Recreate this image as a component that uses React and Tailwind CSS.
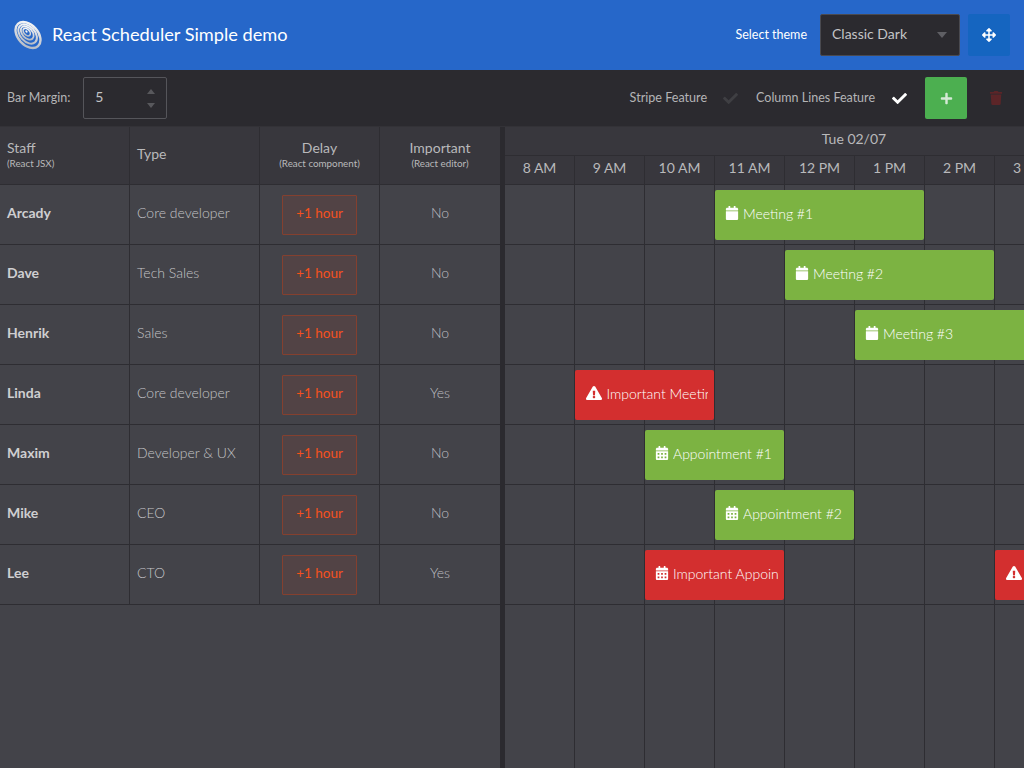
import React from 'react';
import { FaArrowsAlt, FaCheck, FaPlus, FaTrash, FaCalendar, FaCalendarAlt, FaExclamationTriangle } from 'react-icons/fa';

const hours = ['8 AM', '9 AM', '10 AM', '11 AM', '12 PM', '1 PM', '2 PM', '3 PM'];

const rows = [
  { name: 'Arcady', type: 'Core developer', important: 'No', bars: [{ left: 210, width: 209, text: 'Meeting #1', icon: 'cal' }] },
  { name: 'Dave', type: 'Tech Sales', important: 'No', bars: [{ left: 280, width: 209, text: 'Meeting #2', icon: 'cal' }] },
  { name: 'Henrik', type: 'Sales', important: 'No', bars: [{ left: 350, width: 209, text: 'Meeting #3', icon: 'cal' }] },
  { name: 'Linda', type: 'Core developer', important: 'Yes', bars: [{ left: 70, width: 139, text: 'Important Meeting', icon: 'warn', red: true }] },
  { name: 'Maxim', type: 'Developer & UX', important: 'No', bars: [{ left: 140, width: 139, text: 'Appointment #1', icon: 'grid' }] },
  { name: 'Mike', type: 'CEO', important: 'No', bars: [{ left: 210, width: 139, text: 'Appointment #2', icon: 'grid' }] },
  { name: 'Lee', type: 'CTO', important: 'Yes', bars: [
    { left: 140, width: 139, text: 'Important Appointment', icon: 'grid', red: true },
    { left: 490, width: 139, text: 'Important Meeting', icon: 'warn', red: true },
  ] },
];

const Logo = () => (
  <svg width="30" height="30" viewBox="0 0 30 30" fill="none">
    <defs>
      <linearGradient id="logoFade" x1="0" y1="0" x2="1" y2="1">
        <stop offset="0" stopColor="#ffffff" />
        <stop offset="1" stopColor="#a9b1bd" />
      </linearGradient>
    </defs>
    <g transform="rotate(48 15 15)" stroke="url(#logoFade)">
      <ellipse cx="15" cy="15" rx="15" ry="10" strokeWidth="2.4" />
      <ellipse cx="14" cy="14.6" rx="11.2" ry="7.4" strokeWidth="2" />
      <ellipse cx="13" cy="14.2" rx="7.8" ry="5" strokeWidth="1.8" />
      <ellipse cx="12" cy="14" rx="4.4" ry="2.8" strokeWidth="1.6" />
      <ellipse cx="11.4" cy="13.9" rx="1.2" ry="0.8" fill="#ffffff" strokeWidth="0.5" />
    </g>
  </svg>
);

const BarIcon = ({ icon }) => {
  if (icon === 'warn') return <FaExclamationTriangle className="ml-[1.5px] text-white text-[16px] shrink-0" />;
  if (icon === 'grid') return <FaCalendarAlt className="text-white text-[14px] shrink-0" />;
  return <FaCalendar className="text-white text-[14px] shrink-0" />;
};

const HourCells = ({ className }) => (
  <>
    {hours.map(h => (
      <div key={h} className={`w-[70px] shrink-0 border-r border-[#2e2d32] ${className}`} />
    ))}
  </>
);

const App = () => {
  return (
    <div className="w-[1024px] h-[768px] overflow-hidden flex flex-col bg-[#434349] font-['Lato',sans-serif]">
      {/* header */}
      <div className="h-[70px] shrink-0 bg-[#2667c9] flex items-center pl-[13px] pr-[14px]">
        <Logo />
        <div className="ml-[9px] text-[18.2px] text-white">React Scheduler Simple demo</div>
        <div className="ml-auto text-[12.5px] text-white">Select theme</div>
        <div className="ml-[13px] w-[140px] h-[42px] bg-[#2b2a2f] border border-[#4a4a50] rounded-[2px] flex items-center pl-[11px] pr-[12px] pb-[4px] text-[14px] text-[#c4c4c6]">
          Classic Dark
          <div className="ml-auto mt-[4px] w-0 h-0 border-x-[5.5px] border-x-transparent border-t-[6px] border-t-[#5f5f64]" />
        </div>
        <div className="ml-2 w-[42px] h-[42px] bg-[#1565c0] rounded-[2px] flex items-center justify-center">
          <FaArrowsAlt className="text-white text-[14px]" />
        </div>
      </div>

      {/* toolbar */}
      <div className="h-[57px] shrink-0 bg-[#2b2a2f] flex items-center pl-[7px] border-b border-[#333237]">
        <div className="text-[12.5px] text-[#b4b4b6]">Bar Margin:</div>
        <div className="ml-[13px] w-[84px] h-[42px] border border-[#55555a] rounded-[2px] flex items-center pl-[11px] pr-[11px] text-[14px] text-[#c4c4c6]">
          <span className="pb-[4px]">5</span>
          <div className="ml-auto flex flex-col gap-[9px]">
            <div className="w-0 h-0 border-x-[4px] border-x-transparent border-b-[5px] border-b-[#58585c]" />
            <div className="w-0 h-0 border-x-[4px] border-x-transparent border-t-[5px] border-t-[#58585c]" />
          </div>
        </div>
        <div className="ml-auto text-[12.6px] text-[#b4b4b6]">Stripe Feature</div>
        <FaCheck className="ml-4 text-[#3f3f43] text-[15px]" />
        <div className="ml-[18px] text-[12.5px] text-[#b4b4b6]">Column Lines Feature</div>
        <FaCheck className="ml-[17px] text-white text-[15px]" />
        <div className="ml-[18px] w-[42px] h-[42px] bg-[#4caf50] rounded-[2px] flex items-center justify-center">
          <FaPlus className="text-[#d5e9d6] text-[13px]" />
        </div>
        <div className="w-[57px] flex justify-center">
          <FaTrash className="text-[#5c2528] text-[14px]" />
        </div>
      </div>

      <div className="flex-1 flex min-h-0">
        {/* locked grid */}
        <div className="w-[500px] shrink-0 flex flex-col">
          <div className="h-[58px] shrink-0 flex bg-[#38373d] border-b border-[#2e2d32] text-[#b9b9bb]">
            <div className="w-[130px] border-r border-[#2e2d32] pl-[7px] pb-[4px] flex flex-col justify-center">
              <div className="text-[14px] leading-[18px]">Staff</div>
              <div className="text-[9.8px] leading-[12px]">(React JSX)</div>
            </div>
            <div className="w-[130px] border-r border-[#2e2d32] pl-[7px] pb-[4px] flex items-center text-[14px]">Type</div>
            <div className="w-[120px] border-r border-[#2e2d32] pb-[4px] flex flex-col justify-center items-center">
              <div className="text-[14px] leading-[18px]">Delay</div>
              <div className="text-[9.8px] leading-[12px]">(React component)</div>
            </div>
            <div className="w-[120px] pb-[4px] flex flex-col justify-center items-center">
              <div className="text-[14px] leading-[18px]">Important</div>
              <div className="text-[9.8px] leading-[12px]">(React editor)</div>
            </div>
          </div>
          {rows.map(r => (
            <div key={r.name} className="h-[60px] shrink-0 flex border-b border-[#2e2d32] text-[14px] text-[#bdbdc0]">
              <div className="w-[130px] border-r border-[#2e2d32] pl-[7px] pb-[4px] flex items-center font-bold text-[#cfcfd1]">{r.name}</div>
              <div className="w-[130px] border-r border-[#2e2d32] pl-[7px] pb-[4px] flex items-center font-light text-[#c4c4c7]">{r.type}</div>
              <div className="w-[120px] border-r border-[#2e2d32] flex items-center justify-center">
                <div className="w-[75px] h-[40px] pb-[2px] flex items-center justify-center border border-[#84402f] bg-[#524345] rounded-[1px] text-[13.5px] text-[#f4511e]">+1 hour</div>
              </div>
              <div className="w-[120px] pb-[4px] flex items-center justify-center font-light">{r.important}</div>
            </div>
          ))}
        </div>

        {/* splitter */}
        <div className="w-[5px] shrink-0 bg-[#2b2a2f]" />

        {/* timeline */}
        <div className="flex-1 min-w-0 overflow-hidden flex flex-col">
          <div className="h-[58px] shrink-0 bg-[#38373d] border-b border-[#2e2d32] text-[#b9b9bb] w-[698px]">
            <div className="h-[29px] pb-[5px] border-b border-[#2e2d32] flex items-center justify-center text-[14px]">Tue 02/07</div>
            <div className="h-[28px] flex text-[14px]">
              {hours.map(h => (
                <div key={h} className="w-[70px] shrink-0 pb-[5px] border-r border-[#2e2d32] flex items-center justify-center">{h}</div>
              ))}
            </div>
          </div>
          {rows.map(r => (
            <div key={r.name} className="relative h-[60px] shrink-0 flex border-b border-[#2e2d32]">
              <HourCells className="h-full" />
              {r.bars.map(b => (
                <div
                  key={b.text}
                  className={`absolute top-[5px] h-[50px] rounded-[2px] flex items-center pl-[9.5px] pr-[6px] pb-[4px] gap-[4.5px] ${b.red ? 'bg-[#d32f2f]' : 'bg-[#7cb342]'}`}
                  style={{ left: b.left, width: b.width }}
                >
                  <BarIcon icon={b.icon} />
                  <div className="overflow-hidden whitespace-nowrap text-[14px] font-light text-white">{b.text}</div>
                </div>
              ))}
            </div>
          ))}
          <div className="flex-1 flex min-h-0">
            <HourCells className="h-full" />
          </div>
        </div>
      </div>
    </div>
  );
};

export default App;
